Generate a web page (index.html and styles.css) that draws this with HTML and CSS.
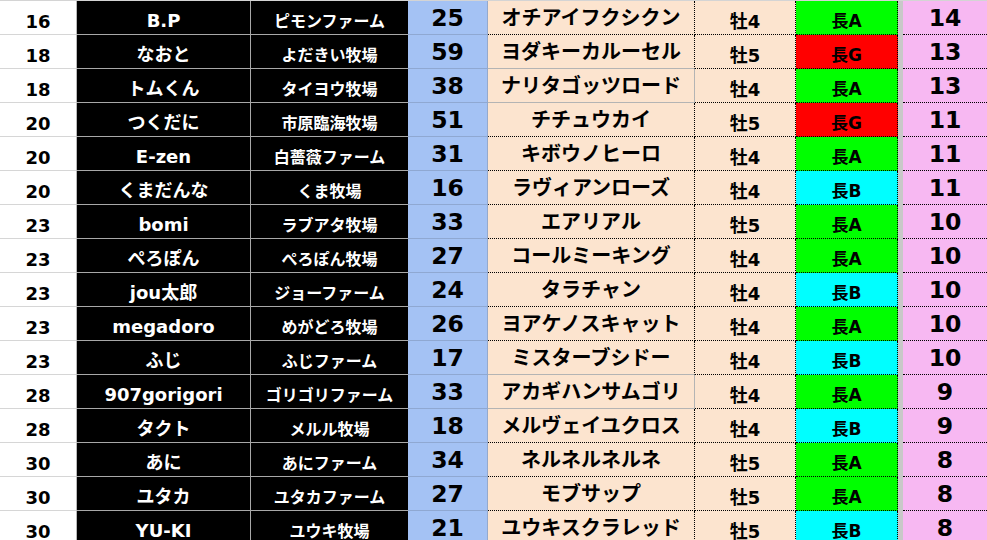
FILE: index.html
```html
<!DOCTYPE html>
<html lang="ja">
<head>
<meta charset="utf-8">
<title>ランキング</title>
<link rel="stylesheet" href="styles.css">
</head>
<body>
<table class="sheet">
  <colgroup>
    <col class="c-rank"><col class="c-name"><col class="c-farm"><col class="c-pt"><col class="c-horse"><col class="c-sex"><col class="c-type"><col class="c-gap"><col class="c-score">
  </colgroup>
  <tbody>
    <tr><td class="rank">16</td><td class="name">B.P</td><td class="farm">ピモンファーム</td><td class="pt">25</td><td class="horse">オチアイフクシクン</td><td class="sex">牡4</td><td class="type t-a">長A</td><td class="gap"></td><td class="score">14</td></tr>
    <tr><td class="rank">18</td><td class="name">なおと</td><td class="farm">よだきい牧場</td><td class="pt">59</td><td class="horse pre-plain">ヨダキーカルーセル</td><td class="sex">牡5</td><td class="type t-g">長G</td><td class="gap"></td><td class="score">13</td></tr>
    <tr><td class="rank">18</td><td class="name">トムくん</td><td class="farm">タイヨウ牧場</td><td class="pt">38</td><td class="horse plain">ナリタゴッツロード</td><td class="sex">牡4</td><td class="type t-a">長A</td><td class="gap"></td><td class="score">13</td></tr>
    <tr><td class="rank">20</td><td class="name">つくだに</td><td class="farm">市原臨海牧場</td><td class="pt">51</td><td class="horse">チチュウカイ</td><td class="sex">牡5</td><td class="type t-g">長G</td><td class="gap"></td><td class="score">11</td></tr>
    <tr><td class="rank">20</td><td class="name">E-zen</td><td class="farm">白薔薇ファーム</td><td class="pt">31</td><td class="horse">キボウノヒーロ</td><td class="sex">牡4</td><td class="type t-a">長A</td><td class="gap"></td><td class="score">11</td></tr>
    <tr><td class="rank">20</td><td class="name">くまだんな</td><td class="farm">くま牧場</td><td class="pt">16</td><td class="horse">ラヴィアンローズ</td><td class="sex">牡4</td><td class="type t-b">長B</td><td class="gap"></td><td class="score">11</td></tr>
    <tr><td class="rank">23</td><td class="name">bomi</td><td class="farm">ラブアタ牧場</td><td class="pt">33</td><td class="horse">エアリアル</td><td class="sex">牡5</td><td class="type t-a">長A</td><td class="gap"></td><td class="score">10</td></tr>
    <tr><td class="rank">23</td><td class="name">ぺろぽん</td><td class="farm">ぺろぽん牧場</td><td class="pt">27</td><td class="horse">コールミーキング</td><td class="sex">牡4</td><td class="type t-a">長A</td><td class="gap"></td><td class="score">10</td></tr>
    <tr><td class="rank">23</td><td class="name">jou太郎</td><td class="farm">ジョーファーム</td><td class="pt">24</td><td class="horse">タラチャン</td><td class="sex">牡4</td><td class="type t-b">長B</td><td class="gap"></td><td class="score">10</td></tr>
    <tr><td class="rank">23</td><td class="name">megadoro</td><td class="farm">めがどろ牧場</td><td class="pt">26</td><td class="horse">ヨアケノスキャット</td><td class="sex">牡4</td><td class="type t-a">長A</td><td class="gap"></td><td class="score">10</td></tr>
    <tr><td class="rank">23</td><td class="name">ふじ</td><td class="farm">ふじファーム</td><td class="pt">17</td><td class="horse pre-plain">ミスターブシドー</td><td class="sex">牡4</td><td class="type t-b">長B</td><td class="gap"></td><td class="score">10</td></tr>
    <tr><td class="rank">28</td><td class="name">907gorigori</td><td class="farm">ゴリゴリファーム</td><td class="pt">33</td><td class="horse plain">アカギハンサムゴリ</td><td class="sex">牡4</td><td class="type t-a">長A</td><td class="gap"></td><td class="score">9</td></tr>
    <tr><td class="rank">28</td><td class="name">タクト</td><td class="farm">メルル牧場</td><td class="pt">18</td><td class="horse">メルヴェイユクロス</td><td class="sex">牡4</td><td class="type t-b">長B</td><td class="gap"></td><td class="score">9</td></tr>
    <tr><td class="rank">30</td><td class="name">あに</td><td class="farm">あにファーム</td><td class="pt">34</td><td class="horse">ネルネルネルネ</td><td class="sex">牡5</td><td class="type t-a">長A</td><td class="gap"></td><td class="score">8</td></tr>
    <tr><td class="rank">30</td><td class="name">ユタカ</td><td class="farm">ユタカファーム</td><td class="pt">27</td><td class="horse">モブサップ</td><td class="sex">牡5</td><td class="type t-a">長A</td><td class="gap"></td><td class="score">8</td></tr>
    <tr><td class="rank">30</td><td class="name">YU-KI</td><td class="farm">ユウキ牧場</td><td class="pt">21</td><td class="horse">ユウキスクラレッド</td><td class="sex">牡5</td><td class="type t-b">長B</td><td class="gap"></td><td class="score">8</td></tr>
  </tbody>
</table>
</body>
</html>
```
FILE: styles.css
```css
html, body {
  margin: 0;
  padding: 0;
  background: #ffffff;
  overflow: hidden;
}

.sheet {
  border-collapse: separate;
  border-spacing: 0;
  table-layout: fixed;
  width: 987px;
  font-family: "DejaVu Sans", "Noto Sans CJK JP", sans-serif;
  font-weight: 700;
  color: #000;
  border-top: 1px solid #d4d4d4;
}

.c-rank { width: 77px; }
.c-name { width: 174px; }
.c-farm { width: 157px; }
.c-pt { width: 80px; }
.c-horse { width: 207px; }
.c-sex { width: 101px; }
.c-type { width: 102px; }
.c-gap { width: 5px; }
.c-score { width: 84px; }

.sheet td {
  height: 34px;
  padding: 0;
  box-sizing: border-box;
  text-align: center;
  vertical-align: top;
  white-space: nowrap;
  overflow: hidden;
  line-height: 1;
}

.sheet td.rank {
  background: #ffffff;
  font-size: 18px;
  line-height: 16px;
  padding-top: 13px;
  border-right: 1px solid #b8b8b8;
  border-bottom: 1px solid #d6d6d6;
}

.sheet td.name {
  background: #000;
  color: #fff;
  font-size: 18px;
  line-height: 16px;
  padding-top: 12px;
  border-right: 1px solid #a8a8a8;
  border-bottom: 1px solid #a8a8a8;
}

.sheet td.farm {
  background: #000;
  color: #fff;
  font-size: 16px;
  line-height: 14px;
  padding-top: 14px;
  border-bottom: 1px solid #a8a8a8;
}

.sheet td.pt {
  background: #a4c2f4;
  font-size: 23.5px;
  line-height: 21.5px;
  padding-top: 7px;
  border-right: 1px solid #94a9cc;
  border-bottom: 1px solid #8fa8d2;
}

.sheet td.horse {
  background: #fce4cf;
  font-size: 20px;
  line-height: 20px;
  font-family: "Noto Sans CJK JP", sans-serif;
  padding-top: 6px;
  border-right: 1px dotted #000;
  border-bottom: 1px dotted #000;
}

.sheet td.horse.pre-plain {
  border-bottom: 1px solid #b4b4b4;
}

.sheet td.horse.plain {
  border-right: 1px solid #b4b4b4;
  border-bottom: 1px solid #b4b4b4;
}

.sheet td.sex {
  background: #fce4cf;
  font-size: 18px;
  line-height: 16px;
  padding-top: 13px;
  border-right: 1px dotted #000;
  border-bottom: 1px dotted #000;
}

.sheet td.type {
  font-size: 17px;
  line-height: 15px;
  padding-top: 13px;
  border-right: 1px dotted #000;
  border-bottom: 1px dotted #000;
}

.t-a { background: #00ff00; }
.t-g { background: #ff0000; }
.t-b { background: #00ffff; }

.sheet td.gap {
  background: #c8c8c8;
}

.sheet td.score {
  background: #f7b8f2;
  font-size: 23.5px;
  line-height: 21.5px;
  padding-top: 7px;
  border-bottom: 1px dotted #000;
}
```
